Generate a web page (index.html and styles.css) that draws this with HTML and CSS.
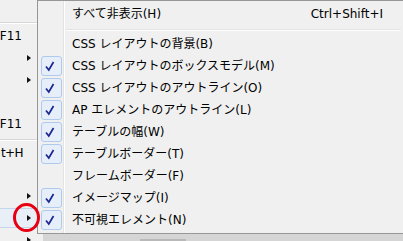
FILE: index.html
```html
<!DOCTYPE html>
<html lang="ja">
<head>
<meta charset="utf-8">
<link rel="stylesheet" href="styles.css">
</head>
<body>
<div class="screen">
  <div class="parent">
    <div class="prow top"></div>
    <div class="psep"></div>
    <div class="prow"><span class="pkey">F11</span></div>
    <div class="prow"><span class="pkey"></span><i class="parr"></i></div>
    <div class="prow"><span class="pkey"></span><i class="parr"></i></div>
    <div class="prow"></div>
    <div class="prow"><span class="pkey">F11</span></div>
    <div class="psep psep-low"></div>
    <div class="prow"><span class="pkey tight">t+H</span></div>
    <div class="prow gap"></div>
    <div class="prow"><span class="pkey"></span><i class="parr"></i></div>
    <div class="prow hl"><span class="pkey"></span><i class="parr"></i></div>
    <div class="prow"><span class="pkey"></span><i class="parr"></i></div>
  </div>
  <div class="subwrap">
    <div class="submenu">
      <div class="item"><span class="gut"></span><span class="label">すべて非表示(H)</span><span class="key">Ctrl+Shift+I</span></div>
      <div class="sep"></div>
      <div class="item"><span class="gut"></span><span class="label">CSS レイアウトの背景(B)</span></div>
      <div class="item"><span class="gut"><span class="chk"><svg width="21" height="20" viewBox="0 0 21 20"><path d="M5 10.5 L7.8 14 L12.5 6" fill="none" stroke="#1a2790" stroke-width="1.7"/></svg></span></span><span class="label">CSS レイアウトのボックスモデル(M)</span></div>
      <div class="item"><span class="gut"><span class="chk"><svg width="21" height="20" viewBox="0 0 21 20"><path d="M5 10.5 L7.8 14 L12.5 6" fill="none" stroke="#1a2790" stroke-width="1.7"/></svg></span></span><span class="label">CSS レイアウトのアウトライン(O)</span></div>
      <div class="item"><span class="gut"><span class="chk"><svg width="21" height="20" viewBox="0 0 21 20"><path d="M5 10.5 L7.8 14 L12.5 6" fill="none" stroke="#1a2790" stroke-width="1.7"/></svg></span></span><span class="label">AP エレメントのアウトライン(L)</span></div>
      <div class="item"><span class="gut"><span class="chk"><svg width="21" height="20" viewBox="0 0 21 20"><path d="M5 10.5 L7.8 14 L12.5 6" fill="none" stroke="#1a2790" stroke-width="1.7"/></svg></span></span><span class="label">テーブルの幅(W)</span></div>
      <div class="item"><span class="gut"><span class="chk"><svg width="21" height="20" viewBox="0 0 21 20"><path d="M5 10.5 L7.8 14 L12.5 6" fill="none" stroke="#1a2790" stroke-width="1.7"/></svg></span></span><span class="label">テーブルボーダー(T)</span></div>
      <div class="item"><span class="gut"></span><span class="label">フレームボーダー(F)</span></div>
      <div class="item"><span class="gut"><span class="chk"><svg width="21" height="20" viewBox="0 0 21 20"><path d="M5 10.5 L7.8 14 L12.5 6" fill="none" stroke="#1a2790" stroke-width="1.7"/></svg></span></span><span class="label">イメージマップ(I)</span></div>
      <div class="item"><span class="gut"><span class="chk"><svg width="21" height="20" viewBox="0 0 21 20"><path d="M5 10.5 L7.8 14 L12.5 6" fill="none" stroke="#1a2790" stroke-width="1.7"/></svg></span></span><span class="label">不可視エレメント(N)</span></div>
    </div>
    <div class="strip"><span class="strip-edge"></span><span class="strip-rest"><span class="strip-dark"></span></span></div>
  </div>
  <div class="circle"></div>
</div>
</body>
</html>
```

FILE: styles.css
```css
html, body {
  margin: 0;
  padding: 0;
}
body {
  width: 403px;
  height: 241px;
  overflow: hidden;
  background: #f0f0f0;
  font-family: "DejaVu Sans", "Noto Sans CJK JP", sans-serif;
  font-size: 12px;
  color: #000;
}
.screen {
  position: relative;
  display: flex;
  width: 403px;
  height: 241px;
  overflow: hidden;
}
.parent {
  width: 37px;
  flex: none;
  display: flex;
  flex-direction: column;
  background: #f0f0f0;
  overflow: hidden;
}
.prow {
  height: 22px;
  flex: none;
  display: flex;
  align-items: center;
  box-sizing: border-box;
}
.prow.top { height: 19px; }
.prow.gap { height: 21px; }
.prow.hl {
  height: 20px;
  margin: 1px 0;
  background: #e9eff7;
  border-top: 1px solid #c3d6ec;
  border-bottom: 1px solid #c3d6ec;
}
.pkey {
  width: 22px;
  flex: none;
  display: flex;
  justify-content: flex-end;
  overflow: hidden;
  white-space: nowrap;
  line-height: 22px;
}
.pkey.tight {
  width: 23px;
  margin-right: -1px;
  letter-spacing: -0.6px;
}
.parr {
  width: 0;
  height: 0;
  margin-left: 5px;
  border-left: 4px solid #111;
  border-top: 3.5px solid transparent;
  border-bottom: 3.5px solid transparent;
}
.psep {
  height: 6px;
  flex: none;
  background: linear-gradient(to bottom, transparent 3px, #d7d7d7 3px, #d7d7d7 4px, #ffffff 4px, #ffffff 5px, transparent 5px);
}
.psep-low {
  height: 7px;
  background: linear-gradient(to bottom, transparent 4px, #d7d7d7 4px, #d7d7d7 5px, #ffffff 5px, #ffffff 6px, transparent 6px);
}
.subwrap {
  flex: 1;
  display: flex;
  flex-direction: column;
}
.submenu {
  height: 234px;
  box-sizing: border-box;
  border-top: 1px solid #979797;
  border-left: 1px solid #979797;
  border-bottom: 1px solid #979797;
  padding: 2px 0;
  background: linear-gradient(to right, #f0f0f0 0, #f0f0f0 25px, #e2e3e3 25px, #e2e3e3 26px, #ffffff 26px, #ffffff 27px, #f0f0f0 27px);
}
.item {
  height: 22px;
  display: flex;
  align-items: center;
  line-height: 22px;
  white-space: nowrap;
}
.gut {
  width: 34px;
  flex: none;
  height: 22px;
  display: flex;
  align-items: center;
}
.chk {
  width: 21px;
  height: 20px;
  margin-left: 3px;
  box-sizing: border-box;
  border: 1px solid #aecbee;
  border-radius: 3px;
  background: #e6eefa;
  display: flex;
}
.chk svg {
  display: block;
  margin: -1px;
}
.label {
  flex: 1;
}
.key {
  padding-right: 20px;
}
.sep {
  height: 8px;
  margin-left: 28px;
  margin-right: 2px;
  background: linear-gradient(to bottom, transparent 4px, #e2e3e3 4px, #e2e3e3 5px, #ffffff 5px, #ffffff 6px, transparent 6px);
}
.strip {
  flex: 1;
  display: flex;
}
.strip-edge {
  width: 6px;
  background: #f0f0f0;
}
.strip-rest {
  flex: 1;
  background: #d5d5d5;
  display: flex;
  align-items: flex-end;
  padding-left: 97px;
}
.strip-dark {
  width: 46px;
  height: 2px;
  background: #b9b9b9;
}
.circle {
  position: absolute;
  left: 13px;
  top: 203px;
  width: 27px;
  height: 29px;
  box-sizing: border-box;
  border: 3px solid #e60012;
  border-radius: 50%;
}
```
